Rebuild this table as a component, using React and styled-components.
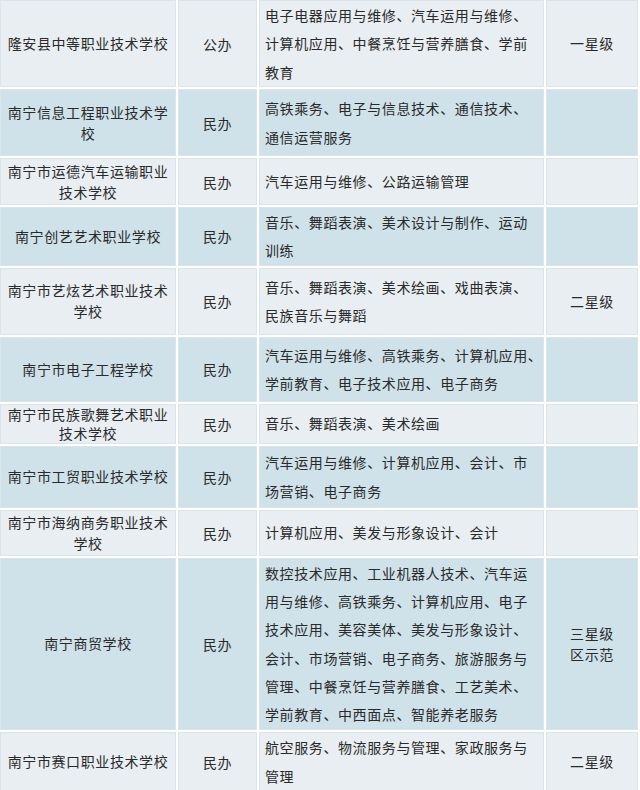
import React from 'react';
import styled, { createGlobalStyle } from 'styled-components';

const GlobalStyle = createGlobalStyle`
  html, body {
    margin: 0;
    padding: 0;
    background: #ffffff;
    overflow: hidden;
  }
  body {
    font-family: "Noto Sans CJK SC", "Liberation Sans", sans-serif;
  }
`;

const columns = [176, 79, 285, 92];

const schools = [
  {
    name: ['隆安县中等职业技术学校'],
    type: '公办',
    majors: ['电子电器应用与维修、汽车运用与维修、', '计算机应用、中餐烹饪与营养膳食、学前', '教育'],
    level: ['一星级'],
    height: 87,
  },
  {
    name: ['南宁信息工程职业技术学', '校'],
    type: '民办',
    majors: ['高铁乘务、电子与信息技术、通信技术、', '通信运营服务'],
    level: [],
    height: 67,
  },
  {
    name: ['南宁市运德汽车运输职业', '技术学校'],
    type: '民办',
    majors: ['汽车运用与维修、公路运输管理'],
    level: [],
    height: 47,
  },
  {
    name: ['南宁创艺艺术职业学校'],
    type: '民办',
    majors: ['音乐、舞蹈表演、美术设计与制作、运动', '训练'],
    level: [],
    height: 57,
  },
  {
    name: ['南宁市艺炫艺术职业技术', '学校'],
    type: '民办',
    majors: ['音乐、舞蹈表演、美术绘画、戏曲表演、', '民族音乐与舞蹈'],
    level: ['二星级'],
    height: 67,
  },
  {
    name: ['南宁市电子工程学校'],
    type: '民办',
    majors: ['汽车运用与维修、高铁乘务、计算机应用、', '学前教育、电子技术应用、电子商务'],
    level: [],
    height: 65,
  },
  {
    name: ['南宁市民族歌舞艺术职业', '技术学校'],
    type: '民办',
    majors: ['音乐、舞蹈表演、美术绘画'],
    level: [],
    height: 40,
    tight: true,
  },
  {
    name: ['南宁市工贸职业技术学校'],
    type: '民办',
    majors: ['汽车运用与维修、计算机应用、会计、市', '场营销、电子商务'],
    level: [],
    height: 62,
  },
  {
    name: ['南宁市海纳商务职业技术', '学校'],
    type: '民办',
    majors: ['计算机应用、美发与形象设计、会计'],
    level: [],
    height: 46,
  },
  {
    name: ['南宁商贸学校'],
    type: '民办',
    majors: [
      '数控技术应用、工业机器人技术、汽车运',
      '用与维修、高铁乘务、计算机应用、电子',
      '技术应用、美容美体、美发与形象设计、',
      '会计、市场营销、电子商务、旅游服务与',
      '管理、中餐烹饪与营养膳食、工艺美术、',
      '学前教育、中西面点、智能养老服务',
    ],
    level: ['三星级', '区示范'],
    height: 172,
  },
  {
    name: ['南宁市赛口职业技术学校'],
    type: '民办',
    majors: ['航空服务、物流服务与管理、家政服务与', '管理'],
    level: ['二星级'],
    height: 60,
  },
];

function Lines({ lines }) {
  return lines.map((line, i) => (
    <React.Fragment key={i}>
      {i > 0 && <br />}
      {line}
    </React.Fragment>
  ));
}

function App() {
  return (
    <>
      <GlobalStyle />
      <Table>
        <colgroup>
          {columns.map((w, i) => (
            <Col key={i} $w={w} />
          ))}
        </colgroup>
        <tbody>
          {schools.map((school, i) => (
            <Row key={i} $alt={i % 2 === 1}>
              <NameCell $h={school.height} $tight={school.tight}>
                <Lines lines={school.name} />
              </NameCell>
              <TypeCell $h={school.height}>{school.type}</TypeCell>
              <MajorCell $h={school.height}>
                <Lines lines={school.majors} />
              </MajorCell>
              <LevelCell $h={school.height}>
                <Lines lines={school.level} />
              </LevelCell>
            </Row>
          ))}
        </tbody>
      </Table>
    </>
  );
}

const Table = styled.table`
  table-layout: fixed;
  width: 642px;
  margin: -2px 0 0 -2px;
  border-collapse: separate;
  border-spacing: 2px;
  color: #2a2a2a;
  font-size: 14px;
  letter-spacing: 0.6px;
`;

const Col = styled.col`
  width: ${props => props.$w}px;
`;

const Row = styled.tr`
  background: ${props => (props.$alt ? '#cfe1e9' : '#e8eef1')};
`;

const Cell = styled.td`
  box-sizing: border-box;
  height: ${props => props.$h}px;
  padding: 0 4px;
  border: 1px solid #dbe4e8;
  vertical-align: middle;
  white-space: nowrap;
  overflow: hidden;
`;

const NameCell = styled(Cell)`
  text-align: center;
  line-height: ${props => (props.$tight ? 19 : 21)}px;
`;

const TypeCell = styled(Cell)`
  text-align: center;
  line-height: 22px;
`;

const MajorCell = styled(Cell)`
  text-align: left;
  padding-left: 5px;
  line-height: 28.3px;
`;

const LevelCell = styled(Cell)`
  text-align: center;
  line-height: 21px;
`;

export default App;
